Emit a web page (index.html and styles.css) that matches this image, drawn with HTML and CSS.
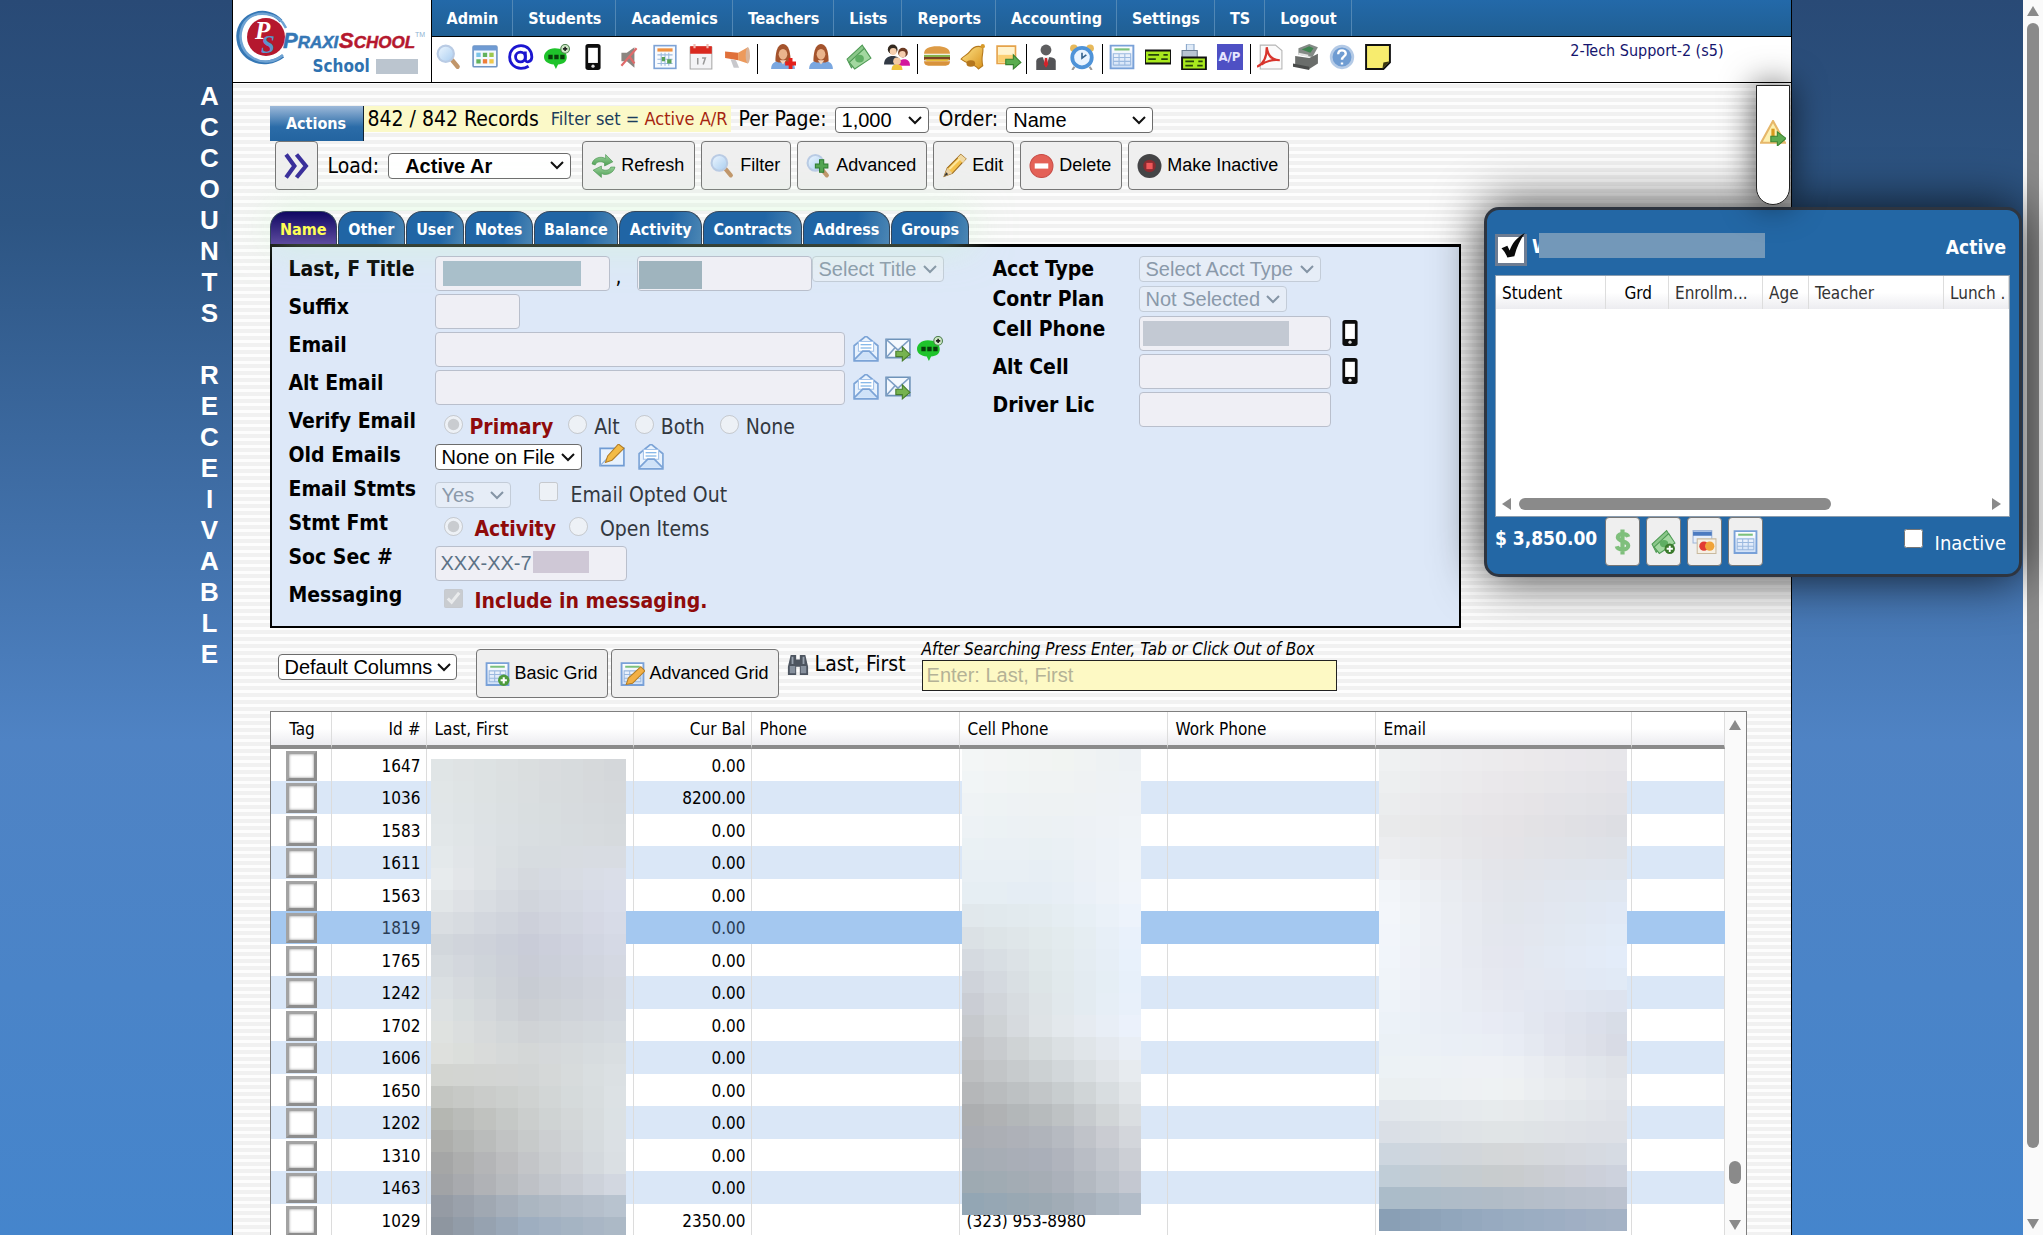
FILE: index.html
```html
<!DOCTYPE html>
<html lang="en">
<head>
<meta charset="utf-8">
<title>PraxiSchool - Accounts Receivable</title>
<link rel="stylesheet" href="styles.css">
</head>
<body>
<svg class="defs" aria-hidden="true">
<defs>
<linearGradient id="gold" x1="0" y1="0" x2="1" y2="1"><stop offset="0" stop-color="#ffe58a"/><stop offset="1" stop-color="#d8921c"/></linearGradient>
<linearGradient id="lens" x1="0" y1="0" x2="1" y2="1"><stop offset="0" stop-color="#eef7ff"/><stop offset="1" stop-color="#a9cdf0"/></linearGradient>
<linearGradient id="sheet" x1="0" y1="0" x2="0" y2="1"><stop offset="0" stop-color="#fff"/><stop offset="1" stop-color="#cfe0f7"/></linearGradient>
<linearGradient id="leaf" x1="0" y1="0" x2="0" y2="1"><stop offset="0" stop-color="#9bd39b"/><stop offset="1" stop-color="#4f9f55"/></linearGradient>
<symbol id="i-search" viewBox="0 0 24 24"><path d="M15 15l5 6" stroke="#c1966a" stroke-width="4" stroke-linecap="round"/><circle cx="9" cy="9" r="7.500" fill="url(#lens)" stroke="#b9cbe4" stroke-width="2"/></symbol>
<symbol id="i-searchplus" viewBox="0 0 24 24"><use href="#i-search"/><path d="M13 6h4v4h4v4h-4v4h-4v-4H9v-4h4z" fill="#54a552" stroke="#2f7d31"/></symbol>
<symbol id="i-board" viewBox="0 0 24 24"><rect x="1" y="2" width="22" height="19" rx="1" fill="#f4f9ff" stroke="#6f94c4" stroke-width="1.500"/><rect x="1" y="2" width="22" height="4" fill="#6f9bd3"/><path d="M4 8h4v4H4z" fill="#7cc4e8"/><path d="M10 8h4v4h-4zM4 14h4v4H4z" fill="#63b25c"/><path d="M16 8h4v4h-4z" fill="#9cc850"/><path d="M10 14h4v4h-4z" fill="#ee7d3a"/><path d="M16 14h4v4h-4z" fill="#f1c84b"/></symbol>
<symbol id="i-at" viewBox="0 0 24 24"><circle cx="11.500" cy="12" r="4.500" fill="none" stroke="#1c16d0" stroke-width="2.600"/><path d="M16 7v7c0 4 6 3 6-2 0-6-4-10.500-10-10.500S1.500 6 1.500 12 6 22.500 12 22.500c3 0 5-.7 7-2" fill="none" stroke="#1c16d0" stroke-width="2.600"/></symbol>
<symbol id="i-chat" viewBox="0 0 24 24"><path d="M10 4c6 0 11 3 11 8s-3 6-8 7l-2 4-2-4c-5-.5-9-3-9-7s4-8 10-8z" fill="#1fc32b"/><path d="M4 10h4v4H4zM9.500 10h4v4h-4zM15 10h4v4h-4z" fill="#083d0b"/><circle cx="19.500" cy="4.500" r="4" fill="#cfe9c6" stroke="#4b7d4b"/><path d="M19.500 2.500v4M17.500 4.500h4" stroke="#222" stroke-width="1.500"/></symbol>
<symbol id="i-phone" viewBox="0 0 24 24"><rect x="5" y="0" width="14" height="24" rx="2.500" fill="#0d0d0d"/><path d="M7.500 3.500h9v14h-9z" fill="#fff"/><circle cx="12" cy="20.500" r="1.500" fill="#ddd"/></symbol>
<symbol id="i-mute" viewBox="0 0 24 24"><path d="M5 8h5l7-5v19l-7-6H5z" fill="#8b8580"/><path d="M5 20L19 4M12 11l5 7" stroke="#e06a6a" stroke-width="2"/></symbol>
<symbol id="i-cal" viewBox="0 0 24 24"><rect x="2" y="1.500" width="20" height="21" fill="#f8fbff" stroke="#7ea3d6" stroke-width="1.500"/><path d="M5 4h14v3H5z" fill="#f0903e"/><path d="M5 10h14M5 14h14M5 18h14M8.500 8v12M12 8v12M15.500 8v12" stroke="#9dbbdd"/><path d="M9 12h3v4H9zM14 14h4v4h-4z" fill="#59a257"/></symbol>
<symbol id="i-date" viewBox="0 0 24 24"><path d="M2 3h20v20H2z" fill="#f4f4f6" stroke="#aaa"/><path d="M2 2h20v7H2z" fill="#d9291f"/><path d="M6 0v4M18 0v4" stroke="#efb9b0" stroke-width="2"/><path d="M9 13v6M13 13h3l-2 6" stroke="#999" fill="none" stroke-width="1.400"/></symbol>
<symbol id="i-horn" viewBox="0 0 24 24"><path d="M1 7l12 1v7L1 13z" fill="#e0703a"/><path d="M13 8l9-5v15l-9-3z" fill="#ed9a5c"/><ellipse cx="22" cy="10.500" rx="2" ry="7.500" fill="#d9b49b"/><path d="M6 14l5 1 3 7h-5z" fill="#c8c8cc"/></symbol>
<symbol id="i-user" viewBox="0 0 24 24"><path d="M1 23c0-6 5-8 11-8s11 2 11 8z" fill="#7aa7e0"/><path d="M5 16c0-2 0-16 7-16s7 14 7 16l-3 1H8z" fill="#a4532c"/><ellipse cx="12" cy="9.500" rx="4" ry="5" fill="#eab48c"/><path d="M9 15l3 4 3-4z" fill="#f3d3bb"/></symbol>
<symbol id="i-useradd" viewBox="0 0 24 24"><use href="#i-user"/><path d="M19 13v10M14 18h10" stroke="#e3201b" stroke-width="3.500"/></symbol>
<symbol id="i-cash" viewBox="0 0 24 24"><path d="M1 14L15 1l3 5L5 22z" fill="#8bc78a" stroke="#4f9a55"/><path d="M3 17L17 4l6 9L8 23z" fill="#a3d8a0" stroke="#4f9a55"/><ellipse cx="12.500" cy="13.500" rx="4" ry="3.500" fill="#5fae63"/></symbol>
<symbol id="i-people" viewBox="0 0 24 24"><circle cx="8" cy="5" r="4.500" fill="#33291f"/><circle cx="8.500" cy="7" r="3.200" fill="#f6cfae"/><path d="M0 19c0-6 4-8 8-8s8 2 8 8z" fill="#323a45"/><circle cx="17.500" cy="8" r="4.500" fill="#6b3a22"/><circle cx="17" cy="9.500" r="3" fill="#f6cfae"/><path d="M13 20c0-5 3-6 6-6s5 2 5 6z" fill="#d3199d"/><circle cx="12" cy="16" r="3.500" fill="#f3c9a4"/><path d="M7 24c0-4 2-5 5-5s5 1 5 5z" fill="#f0c33d"/></symbol>
<symbol id="i-burger" viewBox="0 0 24 24"><path d="M0 9c0-5 5-7 12-7s12 2 12 7z" fill="#dd9b45"/><path d="M0 10h24v3H0z" fill="#86b24a"/><path d="M0 12h24v3H0z" fill="#7b4323"/><path d="M0 14h24l-3 2H3z" fill="#e9c140"/><path d="M0 16h24c0 3-2 4-4 4H4c-2 0-4-1-4-4z" fill="#d8923b"/></symbol>
<symbol id="i-bell" viewBox="0 0 24 24"><path d="M21 3c1 6-2 8 0 17l-4 3C13 18 7 19 1 14c2-3 5-3 8-7s7-6 12-4z" fill="url(#gold)" stroke="#b5791d"/><ellipse cx="10" cy="18" rx="4" ry="3" fill="#b4761d"/><circle cx="21" cy="2" r="2" fill="#d79a2b"/></symbol>
<symbol id="i-noteout" viewBox="0 0 24 24"><path d="M1 2h17v16H1z" fill="#fff3cd" stroke="#e5a24a" stroke-width="1.500"/><path d="M2 10h15v7H2z" fill="#fbcf72"/><path d="M9 14h7v-4l7 7-7 6v-4H9z" fill="#5aad4f" stroke="#36812f"/></symbol>
<symbol id="i-man" viewBox="0 0 24 24"><circle cx="12" cy="5.500" r="5" fill="#5e5e60"/><path d="M3 24V16c0-3 3-4 9-4s9 1 9 4v8z" fill="#535356"/><path d="M9 12h6l-3 9z" fill="#eee"/><path d="M11 13h2l1 6-2 3-2-3z" fill="#d2232a"/></symbol>
<symbol id="i-clock" viewBox="0 0 24 24"><path d="M5 21l-2 3M19 21l2 3" stroke="#999" stroke-width="2"/><circle cx="4.500" cy="4" r="3.500" fill="#e7b95b"/><circle cx="19.500" cy="4" r="3.500" fill="#e7b95b"/><circle cx="12" cy="12.500" r="9" fill="#eaf4ff" stroke="#4f93d8" stroke-width="3.500"/><path d="M12 8v5l4-3" stroke="#37648f" stroke-width="1.500" fill="none"/></symbol>
<symbol id="i-sheet" viewBox="0 0 24 24"><path d="M1.500 1.500h21v21h-21z" fill="url(#sheet)" stroke="#79a1d8" stroke-width="1.800"/><path d="M5 5h14" stroke="#7cc17c" stroke-width="2"/><path d="M4 9h16M4 12.500h16M4 16h16M4 19.500h16M4 8.500v11M9.300 8.500v11M14.600 8.500v11M20 8.500v11" stroke="#9bb9df"/></symbol>
<symbol id="i-check" viewBox="0 0 24 24"><path d="M0 6h24v12H0z" fill="#a9ea1e" stroke="#111" stroke-width="1.800"/><path d="M3 10h10M3 14h7M15 14h6M17 10h4" stroke="#28450a" stroke-width="1.700"/></symbol>
<symbol id="i-printcheck" viewBox="0 0 24 24"><path d="M5 0h7v7H5z" fill="#dfeaf7" stroke="#8aa7ca"/><path d="M1 6h14v9H1z" fill="#b9c4d2" stroke="#6c7d92"/><path d="M1 12.500h22v11H1z" fill="#a9ea1e" stroke="#111" stroke-width="1.800"/><path d="M4 16h8M4 20h7M15 20h5M16 16h4" stroke="#28450a" stroke-width="1.500"/></symbol>
<symbol id="i-pdf" viewBox="0 0 24 24"><path d="M3 1h14l6 5v17H3z" fill="#fbfbfb" stroke="#b5b5b5"/><path d="M0 21c7-3 9-10 9-18 1 8 5 12 12 12-6-1-13 1-17 4" fill="none" stroke="#d8342c" stroke-width="2"/></symbol>
<symbol id="i-register" viewBox="0 0 24 24"><path d="M5 4l10-4 8 3-5 9-13-2z" fill="#848a86"/><path d="M8 5l7-3 4 2-3 4z" fill="#3f8450"/><path d="M2 11l13 2 8-4v9l-8 5-13-3z" fill="#6a6d6b"/><path d="M0 18l15 3v3L0 21z" fill="#494b4a"/><path d="M5 9l9 2" stroke="#e4e4e4" stroke-width="2"/></symbol>
<symbol id="i-help" viewBox="0 0 24 24"><circle cx="12" cy="12" r="10" fill="#6f9cd2" stroke="#b4cae6" stroke-width="2.500"/><path d="M8.500 9.500c0-5 7-4.500 7-.5 0 2.500-3.500 2.500-3.500 5.500M12 17v2" fill="none" stroke="#fff" stroke-width="2.200"/></symbol>
<symbol id="i-sticky" viewBox="0 0 24 24"><path d="M1 1h22v16l-6 6H1z" fill="#f7ec6e" stroke="#111" stroke-width="1.800"/><path d="M16 23l1-6 6-1z" fill="#3c3810"/></symbol>
<symbol id="i-refresh" viewBox="0 0 24 24"><path d="M1 10c1-6 9-8 13-5V1l7 7-8 4V9c-4-2-8-1-9 2z" fill="url(#leaf)" stroke="#4a9450" stroke-width=".6"/><path d="M23 13c-1 6-9 9-13 6v4l-8-7 8-4v3c4 2 8 1 9-2z" fill="url(#leaf)" stroke="#4a9450" stroke-width=".6"/></symbol>
<symbol id="i-pencil" viewBox="0 0 24 24"><path d="M2 22l3-8L18 1l5 4L10 19z" fill="#f5c24c" stroke="#9c6a1e"/><path d="M15 4L18 1l5 4-3 4z" fill="#f0d9a4"/><path d="M5 14l5 5-8 3z" fill="#e8cfa0"/><path d="M2 22l2-4 2 2z" fill="#333"/><path d="M7 15L17 5" stroke="#fde59c" stroke-width="2"/></symbol>
<symbol id="i-delete" viewBox="0 0 24 24"><circle cx="12" cy="12" r="11" fill="#e46157" stroke="#c84b45"/><path d="M5.500 9.500h13v5h-13z" fill="#fff"/></symbol>
<symbol id="i-stop" viewBox="0 0 24 24"><circle cx="12" cy="12" r="11.500" fill="#444446"/><circle cx="12" cy="12" r="6" fill="#8b2b30"/><path d="M9 9h6v6H9z" fill="#f0585a"/></symbol>
<symbol id="i-next" viewBox="0 0 24 24"><path d="M2 1l8 11-8 11M12 1l9 11-9 11" fill="none" stroke="#3a2f9b" stroke-width="4"/></symbol>
<symbol id="i-mail" viewBox="0 0 24 24"><path d="M1 9l11-9 11 9v14H1z" fill="#e8f2fd" stroke="#7ba3d6" stroke-width="1.500"/><path d="M5 5h14v9H5z" fill="#fff" stroke="#a4c3ea"/><path d="M7 8h10M7 11h10" stroke="#62a3e2"/><path d="M1 22l8-8h6l8 8" fill="#cfe2f8" stroke="#7ba3d6" stroke-width="1.500"/></symbol>
<symbol id="i-mailout" viewBox="0 0 24 24"><path d="M1 3h22v17H1z" fill="#f3f8fe" stroke="#6f93b9" stroke-width="1.500"/><path d="M1 3l11 10L23 3M1 20l8-9" fill="none" stroke="#7d9ec4" stroke-width="1.500"/><path d="M10 14h6v-4l7 7-7 6v-4h-6z" fill="#76b34f" stroke="#477d2b"/></symbol>
<symbol id="i-mailedit" viewBox="0 0 24 24"><path d="M1 4h22v16H1z" fill="#e8f2fd" stroke="#6f9bd3" stroke-width="1.500"/><path d="M1 20l8-8" stroke="#8fb1dd"/><path d="M6 17l2-6L18 0l5 4-11 11z" fill="#f3bb45" stroke="#b27c24"/></symbol>
<symbol id="i-sheetadd" viewBox="0 0 24 24"><use href="#i-sheet"/><circle cx="18" cy="18" r="5.500" fill="#4d9b3b"/><path d="M18 15v6M15 18h6" stroke="#fff" stroke-width="2"/></symbol>
<symbol id="i-sheetedit" viewBox="0 0 24 24"><use href="#i-sheet"/><path d="M6 22l2-6L20 5l4 4-12 12z" fill="#f3b045" stroke="#b27c24"/></symbol>
<symbol id="i-binoc" viewBox="0 0 24 24"><path d="M4 1h6v5h4V1h6l3 13v9h-9v-9h-4v9H1v-9z" fill="#4d5560"/><path d="M3 13h6v8H3zM15 13h6v8h-6z" fill="#87919e"/><path d="M6 3v8M18 3v8" stroke="#97a1ad" stroke-width="2"/></symbol>
<symbol id="i-warn" viewBox="0 0 24 24"><path d="M12 1l11 20H1z" fill="#fdf0b0" stroke="#e6b76a" stroke-width="2"/><path d="M12 8v8" stroke="#d99a1d" stroke-width="3"/><path d="M10 15h6v-4l8 6-8 7v-4h-6z" fill="#5dab51" stroke="#3b8432"/></symbol>
<symbol id="i-dollar" viewBox="0 0 24 24"><path d="M17.500 7c-1-3-10-4-10 .5 0 4.500 10 3 10 8 0 5-10 4.500-11 .5M12 0v24" fill="none" stroke="#7fbf7c" stroke-width="4"/></symbol>
<symbol id="i-cashadd" viewBox="0 0 24 24"><use href="#i-cash"/><circle cx="18" cy="18.500" r="5" fill="#3b7a2c"/><path d="M18 15.500v6M15 18.500h6" stroke="#fff" stroke-width="1.800"/></symbol>
<symbol id="i-cards" viewBox="0 0 24 24"><path d="M1 1h18v12H1z" fill="#e7effb" stroke="#9fb5d8"/><path d="M1 2h18v4H1z" fill="#4d7bc0"/><path d="M5 9h18v14H5z" fill="#f6f0e4" stroke="#c9b99e"/><circle cx="11.500" cy="16" r="4.500" fill="#e23b32"/><circle cx="17" cy="16" r="4.500" fill="#f0a43a"/></symbol>
<symbol id="i-tick" viewBox="0 0 24 24"><path d="M3 13l5-2 2 4C12 9 16 4 23 0c-4 6-7 12-9 20l-6 1c-1-3-3-6-5-8z" fill="#0a0a0a"/></symbol>
</defs>
</svg>

<div class="page">
  <div class="gutter">
    <div class="vertical"><span>A</span><span>C</span><span>C</span><span>O</span><span>U</span><span>N</span><span>T</span><span>S</span><span>&nbsp;</span><span>R</span><span>E</span><span>C</span><span>E</span><span>I</span><span>V</span><span>A</span><span>B</span><span>L</span><span>E</span></div>
  </div>

  <div class="shell">
    <header class="top">
      <div class="brand">
        <svg class="logo" viewBox="0 0 192 60" role="img" aria-label="PraxiSchool">
          <circle cx="31" cy="28" r="19" fill="#b5182e"/>
          <path d="M46 12C32-4 4 4 3 27c0 24 26 34 45 20" fill="none" stroke="#3577b5" stroke-width="3.500"/>
          <path d="M51 19C44 3 20 0 10 13c-8 12-5 29 8 36 10 6 22 4 30-3" fill="none" stroke="#6fa3d3" stroke-width="2.500"/>
          <text x="20" y="30" class="mono-p">P</text><text x="26" y="44" class="mono-s">S</text>
          <text x="48" y="39" class="word blue">P<tspan class="small">RAXI</tspan></text>
          <text x="104" y="39" class="word red">S<tspan class="small">CHOOL</tspan></text>
          <text x="180" y="28" class="tm">TM</text>
        </svg>
        <div class="school">School <span class="mask mask-school"></span></div>
      </div>
      <div class="bars">
        <nav class="menu">
          <a href="#">Admin</a><a href="#">Students</a><a href="#">Academics</a><a href="#">Teachers</a><a href="#">Lists</a><a href="#">Reports</a><a href="#">Accounting</a><a href="#">Settings</a><a href="#">TS</a><a href="#">Logout</a>
        </nav>
        <div class="tools">
          <div class="group lead">
            <svg><use href="#i-search"/></svg><svg><use href="#i-board"/></svg><svg><use href="#i-at"/></svg><svg><use href="#i-chat"/></svg><svg><use href="#i-phone"/></svg><svg><use href="#i-mute"/></svg><svg><use href="#i-cal"/></svg><svg><use href="#i-date"/></svg><svg><use href="#i-horn"/></svg>
          </div>
          <div class="group loose">
            <svg><use href="#i-useradd"/></svg><svg><use href="#i-user"/></svg><svg><use href="#i-cash"/></svg><svg><use href="#i-people"/></svg>
          </div>
          <div class="group close">
            <svg><use href="#i-burger"/></svg><svg><use href="#i-bell"/></svg><svg><use href="#i-noteout"/></svg>
          </div>
          <div class="group">
            <svg><use href="#i-man"/></svg><svg><use href="#i-clock"/></svg>
          </div>
          <div class="group">
            <svg><use href="#i-sheet"/></svg><svg><use href="#i-check"/></svg><svg><use href="#i-printcheck"/></svg><span class="ap">A/P</span>
          </div>
          <div class="group last">
            <svg><use href="#i-pdf"/></svg><svg><use href="#i-register"/></svg><svg><use href="#i-help"/></svg><svg><use href="#i-sticky"/></svg>
          </div>
          <div class="who">2-Tech Support-2 (s5)</div>
        </div>
      </div>
    </header>

    <main>
      <div class="records">
        <button class="actions">Actions</button>
        <div class="band"><span class="count">842 / 842 Records</span><span class="filter">Filter set = <em>Active A/R</em></span></div>
        <label for="per">Per Page:</label>
        <select id="per" class="w-94"><option>1,000</option></select>
        <label for="order">Order:</label>
        <select id="order" class="w-147"><option>Name</option></select>
      </div>
      <div class="commands">
        <button class="btn" aria-label="Next"><svg><use href="#i-next"/></svg></button>
        <label for="load">Load:</label>
        <select id="load" class="load"><option>Active Ar</option></select>
        <button class="btn"><svg><use href="#i-refresh"/></svg>Refresh</button>
        <button class="btn"><svg><use href="#i-search"/></svg>Filter</button>
        <button class="btn"><svg><use href="#i-searchplus"/></svg>Advanced</button>
        <button class="btn"><svg><use href="#i-pencil"/></svg>Edit</button>
        <button class="btn"><svg><use href="#i-delete"/></svg>Delete</button>
        <button class="btn"><svg><use href="#i-stop"/></svg>Make Inactive</button>
      </div>

      <nav class="tabs">
        <a class="on" href="#">Name</a><a href="#">Other</a><a href="#">User</a><a href="#">Notes</a><a href="#">Balance</a><a href="#">Activity</a><a href="#">Contracts</a><a href="#">Address</a><a href="#">Groups</a>
      </nav>

      <form class="panel">
        <div class="left">
          <div class="row"><label for="last">Last, F Title</label><div class="field">
            <span class="masked"><input id="last" class="w-175" disabled><span class="mask mask-last"></span></span><span class="comma">,</span>
            <span class="masked"><input class="w-175" aria-label="First" disabled><span class="mask mask-first"></span></span>
            <select aria-label="Title" disabled><option>Select Title</option></select></div></div>
          <div class="row"><label for="suffix">Suffix</label><div class="field"><input id="suffix" class="w-85" disabled></div></div>
          <div class="row"><label for="email">Email</label><div class="field"><input id="email" class="w-410" disabled><span class="icons"><svg><use href="#i-mail"/></svg><svg><use href="#i-mailout"/></svg><svg><use href="#i-chat"/></svg></span></div></div>
          <div class="row"><label for="alt">Alt Email</label><div class="field"><input id="alt" class="w-410" disabled><span class="icons"><svg><use href="#i-mail"/></svg><svg><use href="#i-mailout"/></svg></span></div></div>
          <div class="row short"><span class="lbl">Verify Email</span><div class="field choices">
            <input type="radio" name="v" id="v1" checked disabled><label for="v1" class="hot">Primary</label>
            <input type="radio" name="v" id="v2" disabled><label for="v2">Alt</label>
            <input type="radio" name="v" id="v3" disabled><label for="v3">Both</label>
            <input type="radio" name="v" id="v4" disabled><label for="v4">None</label></div></div>
          <div class="row short"><label for="old">Old Emails</label><div class="field pad"><select id="old"><option>None on File</option></select><span class="icons wide"><svg><use href="#i-mailedit"/></svg><svg><use href="#i-mail"/></svg></span></div></div>
          <div class="row short"><label for="stm">Email Stmts</label><div class="field choices opt"><select id="stm" class="w-76" disabled><option>Yes</option></select><input type="checkbox" id="opt" disabled><label for="opt">Email Opted Out</label></div></div>
          <div class="row short"><span class="lbl">Stmt Fmt</span><div class="field choices far">
            <input type="radio" name="f" id="f1" checked disabled><label for="f1" class="hot">Activity</label>
            <input type="radio" name="f" id="f2" disabled><label for="f2">Open Items</label></div></div>
          <div class="row"><label for="soc">Soc Sec #</label><div class="field pad"><span class="masked"><input id="soc" class="w-192" value="XXX-XX-7" disabled><span class="mask mask-soc"></span></span></div></div>
          <div class="row"><span class="lbl">Messaging</span><div class="field choices far"><input type="checkbox" id="msg" checked disabled><label for="msg" class="hot">Include in messaging.</label></div></div>
        </div>
        <div class="right">
          <div class="row tight"><label for="acct">Acct Type</label><div class="field"><select id="acct" disabled><option>Select Acct Type</option></select></div></div>
          <div class="row tight"><label for="plan">Contr Plan</label><div class="field"><select id="plan" disabled><option>Not Selected</option></select></div></div>
          <div class="row"><label for="cell">Cell Phone</label><div class="field"><span class="masked"><input id="cell" class="w-192" disabled><span class="mask mask-cell"></span></span><span class="icons"><svg><use href="#i-phone"/></svg></span></div></div>
          <div class="row"><label for="altcell">Alt Cell</label><div class="field"><input id="altcell" class="w-192" disabled><span class="icons"><svg><use href="#i-phone"/></svg></span></div></div>
          <div class="row"><label for="lic">Driver Lic</label><div class="field"><input id="lic" class="w-192" disabled></div></div>
        </div>
      </form>

      <div class="gridbar">
        <select aria-label="Columns" class="cols"><option>Default Columns</option></select>
        <button class="btn"><svg><use href="#i-sheetadd"/></svg>Basic Grid</button>
        <button class="btn"><svg><use href="#i-sheetedit"/></svg>Advanced Grid</button>
        <label class="find" for="q"><svg><use href="#i-binoc"/></svg>Last, First</label>
        <div class="query"><em>After Searching Press Enter, Tab or Click Out of Box</em><input id="q" placeholder="Enter: Last, First"></div>
      </div>

      <section class="grid">
        <div class="sheet">
          <table>
            <colgroup><col class="c-tag"><col class="c-id"><col class="c-name"><col class="c-bal"><col class="c-ph"><col class="c-ph"><col class="c-ph"><col class="c-mail"><col></colgroup>
            <thead><tr><th class="mid">Tag</th><th class="num">Id #</th><th>Last, First</th><th class="num">Cur Bal</th><th>Phone</th><th>Cell Phone</th><th>Work Phone</th><th>Email</th><th></th></tr></thead>
            <tbody id="rows"></tbody>
          </table>
          <svg class="mosaic m-name" data-src="name" preserveAspectRatio="none"></svg>
          <svg class="mosaic m-cell" data-src="cell" preserveAspectRatio="none"></svg>
          <svg class="mosaic m-mail" data-src="mail" preserveAspectRatio="none"></svg>
        </div>
        <div class="scroll inner"><i class="up"></i><i class="thumb"></i><i class="down"></i></div>
      </section>
    </main>
    <button class="alert-tab" aria-label="Alerts"><svg><use href="#i-warn"/></svg></button>
  </div>

  <div class="gutter"></div>
  <div class="scroll outer"><i class="up"></i><i class="thumb"></i><i class="down"></i></div>

  <aside class="card">
    <div class="card-head"><span class="bigcheck"><svg><use href="#i-tick"/></svg></span><b>W<span class="mask mask-card"></span></b><b class="state">Active</b></div>
    <div class="card-list">
      <table>
        <colgroup><col class="s-1"><col class="s-2"><col class="s-3"><col class="s-4"><col class="s-5"><col></colgroup>
        <thead><tr><th class="dark">Student</th><th class="dark num">Grd</th><th>Enrollm...</th><th>Age</th><th>Teacher</th><th>Lunch .</th></tr></thead>
      </table>
      <div class="hscroll"><i class="lt"></i><i class="track"><i class="thumb"></i></i><i class="rt"></i></div>
    </div>
    <div class="card-foot"><b>$ 3,850.00</b>
      <button class="btn" aria-label="Payment"><svg><use href="#i-dollar"/></svg></button>
      <button class="btn" aria-label="Add cash"><svg><use href="#i-cashadd"/></svg></button>
      <button class="btn" aria-label="Cards"><svg><use href="#i-cards"/></svg></button>
      <button class="btn" aria-label="Ledger"><svg><use href="#i-sheet"/></svg></button>
      <span class="inactive"><input type="checkbox" id="ina"><label for="ina">Inactive</label></span>
    </div>
  </aside>
</div>
<script src="app.js"></script>
</body>
</html>
```
FILE: styles.css
```css
* { box-sizing: border-box; }
body {
  margin: 0;
  font-family: "DejaVu Sans Condensed", "DejaVu Sans", sans-serif;
  font-stretch: condensed;
  font-size: 21px;
  line-height: 28px;
  color: #000;
}
.defs { position: absolute; width: 0; height: 0; }
svg { flex: none; width: 26px; height: 26px; display: block; }
a { text-decoration: none; }
button, input, select { font-family: "Liberation Sans", Arial, sans-serif; font-size: 20px; margin: 0; }
button { color: #000; }

.page {
  position: relative;
  display: flex;
  height: 100vh;
  overflow: hidden;
  background: linear-gradient(#294a76, #2d5583 18%, #4f83c4 60%, #4585cc);
}
.gutter { flex: 1; display: flex; justify-content: flex-end; padding: 81px 7px 0 0; }
.vertical {
  width: 30px;
  color: #fff;
  font: bold 26px/31px "Liberation Sans", Arial, sans-serif;
  text-align: center;
}
.vertical span { display: block; }

.shell {
  position: relative;
  flex: 0 1 1560px;
  border: solid #000;
  border-width: 0 1px;
  background: repeating-linear-gradient(#f1f1f1 0 4px, #fdfdfd 4px 7px);
}
.top { display: flex; height: 83px; border-bottom: 1px solid #000; background: #fff; }
.brand { width: 199px; border-right: 1px solid #000; padding-top: 9px; }
.logo { width: 192px; height: 60px; margin-left: 2px; }
.mono-p { font: italic bold 25px "Liberation Serif", serif; fill: #fff; }
.mono-s { font: italic bold 25px "Liberation Serif", serif; fill: #5b95cc; }
.word { font: italic bold 22px "Liberation Sans", sans-serif; }
.word .small { font-size: 17px; }
.blue { fill: #3577b5; stroke: #3577b5; stroke-width: .5px; }
.red { fill: #b5182e; stroke: #b5182e; stroke-width: .5px; }
.tm { font: 7px "Liberation Sans", sans-serif; fill: #8fb2d2; }
.school { display: flex; gap: 6px; align-items: center; margin: -14px 0 0 80px; color: #2f72b0; font-weight: bold; font-size: 17px; line-height: 22px; }
.mask { display: block; background: #a9bfca; }
.mask-school { width: 42px; height: 15px; background: #bbc5cf; }
.bars { flex: 1; }
.menu { display: flex; height: 37px; border-bottom: 1px solid #000; background: linear-gradient(#2369a9, #205f93); }
.menu a { padding: 0 14px; border-right: 1px solid #5187b5; color: #fff; font-size: 16px; line-height: 37px; font-weight: bold; }
.menu { padding-left: 1px; gap: 1px; }
.tools { display: flex; height: 45px; padding: 7px 0 8px 4px; }
.group { display: flex; gap: 10px; padding: 0 7px 0 0; margin-right: 6px; border-right: 1px solid #000; }
.lead { margin-right: 12px; }
.loose { gap: 12px; }
.close { padding-right: 4px; }
.last { border: 0; }
.group svg { width: 26px; }
.ap { width: 26px; height: 26px; background: #4e50c4; color: #e6e6ff; font-size: 13px; line-height: 26px; font-weight: bold; text-align: center; }
.who { margin: -7px 67px 0 auto; color: #15156e; font-size: 16px; line-height: 27px; }

main { padding: 23px 44px 0 37px; }
.records { display: flex; align-items: flex-start; height: 35px; line-height: 26px; }
.actions { width: 94px; height: 35px; border: 0; border-right: 1px solid #123; background: linear-gradient(#9db9d9, #2b6ca8 60%, #2364a0); color: #fff; font-family: inherit; font-size: 16px; font-weight: bold; }
.band { display: flex; justify-content: space-between; width: 367px; margin-right: 8px; padding: 0 3px 0 4px; background: #fbf9c8; white-space: nowrap; }
.filter { color: #1c3d5c; font-size: 18px; }
.filter em { color: #a52410; font-style: normal; }
select {
  appearance: none;
  height: 26px;
  padding: 0 25px 0 6px;
  border: 1px solid #6c6c6c;
  border-radius: 4px;
  background: #fff url("data:image/svg+xml,%3Csvg xmlns='http://www.w3.org/2000/svg' viewBox='0 0 14 9'%3E%3Cpath d='M1 1l6 6 6-6' fill='none' stroke='%23111' stroke-width='2'/%3E%3C/svg%3E") right 6px center / 14px 9px no-repeat;
  color: #000;
}
.records select { margin: 1px 10px 0 8px; }
.w-94 { width: 94px; }
.w-147 { width: 147px; }
.commands { display: flex; align-items: center; gap: 6px; height: 49px; padding-left: 5px; }
.commands label { margin: 0 3px 0 4px; }
.load { width: 183px; margin-right: 5px; padding-left: 16px; font-weight: bold; }
.btn { display: flex; align-items: center; gap: 5px; height: 49px; padding: 0 10px 0 8px; border: 1px solid #767676; border-radius: 4px; background: #efefef; font-size: 18px; white-space: nowrap; }
.btn svg { width: 25px; }
.btn[aria-label] { padding: 0 8px; }

.tabs { position: relative; display: flex; width: 700px; height: 33px; margin-top: 21px; gap: 1px; box-shadow: 0 0 40px rgba(205, 250, 205, .6); }
.tabs a { flex: 1 1 auto; border: 1px solid #33465a; border-bottom: 0; border-radius: 16px 16px 0 0; background: linear-gradient(100deg, #2065a5 60%, #4b86b4); color: #fff; font-size: 16px; line-height: 36px; font-weight: bold; text-align: center; }
.tabs .on { background: linear-gradient(#100763, #5d4b9e); color: #ffff55; }

.panel { display: flex; max-width: 1191px; height: 384px; padding: 8px 0 0 17px; border: 3px solid #000; border-width: 3px 2px 2px; background: #dde8f8; }
.left { width: 704px; }
.row { display: flex; height: 38px; }
.short { height: 34px; }
.tight { height: 30px; }
.row > label, .row > .lbl { width: 146px; font-weight: bold; white-space: nowrap; }
.field { display: flex; align-items: flex-start; padding-top: 1px; }
.field input:not([type]) { height: 35px; padding: 0 5px; border: 1px solid #b9bfcc; border-radius: 4px; background: #efeff5; color: #5c7286; }
.field select:disabled { border-color: #c3ccd8; background-color: #e6edf7; color: #8a99aa; opacity: 1; background-image: url("data:image/svg+xml,%3Csvg xmlns='http://www.w3.org/2000/svg' viewBox='0 0 14 9'%3E%3Cpath d='M1 1l6 6 6-6' fill='none' stroke='%238494a5' stroke-width='2'/%3E%3C/svg%3E"); }
.masked { position: relative; display: block; }
.masked .mask { position: absolute; top: 5px; left: 8px; height: 25px; }
.mask-last { width: 138px; }
.masked .mask-first { left: 2px; width: 63px; height: 28px; background: #9fb4be; }
.masked .mask-soc { left: 98px; width: 56px; height: 22px; background: #cfc8d6; }
.mask-cell { width: 146px; background: #c3c9d3; }
.masked .mask-cell { left: 4px; }
.comma { width: 27px; padding-left: 6px; line-height: 42px; }
.w-175 { width: 175px; }
.w-85 { width: 85px; }
.w-76 { width: 76px; }
.w-192 { width: 192px; }
.w-410 { width: 410px; }
.icons { display: flex; gap: 6px; padding: 4px 0 0 8px; }
.icons.wide { gap: 13px; padding: 0 0 0 17px; }
.field.pad { padding-top: 3px; }
.choices { padding: 3px 0 0 9px; color: #33383f; }
.choices input { flex: none; width: 19px; height: 19px; margin: 5px 7px 0 0; }
.choices label { margin: 3px 15px 0 0; white-space: nowrap; }
.far input { margin-right: 12px; }
.far label { margin-right: 13px; }
.field.opt { padding: 7px 0 0; }
.opt input { margin: 0 13px 0 28px; }
.opt label { margin-top: -1px; }
.choices .hot { color: #8f0b0b; font-weight: bold; }
.right .icons { padding-left: 6px; }

.gridbar { display: flex; align-items: flex-start; height: 62px; margin-top: 21px; padding-left: 8px; }
.cols { width: 179px; margin: 5px 19px 0 0; padding-right: 20px; background-position: right 5px center; }
.gridbar .btn { margin-right: 3px; padding-right: 9px; }
.find { display: flex; gap: 6px; margin: 1px 16px 0 5px; white-space: nowrap; }
.find svg { width: 22px; height: 22px; margin-top: 4px; }
.query { display: flex; flex-direction: column; width: 415px; margin-top: -10px; }
.query em { font-size: 17px; line-height: 21px; white-space: nowrap; }
.query input { height: 31px; padding: 0 4px; border: 1px solid #222; background: #fdf9c4; }
.query input::placeholder { color: #b4b296; }

.grid { display: flex; height: 560px; border: 1px solid #7f7f7f; background: #fff; }
.sheet { position: relative; flex: 1; overflow: hidden; }
table { width: 100%; table-layout: fixed; border-collapse: separate; border-spacing: 0; font-size: 17px; line-height: 20px; }
th { height: 33px; padding: 0 5px 0 8px; border-right: 1px solid #ddd; background: linear-gradient(#fff 50%, #ececf0); font-weight: normal; text-align: left; white-space: nowrap; }
.sheet th { height: 37px; border-bottom: 4px solid #8b8b8b; }
.sheet td { height: 32px; padding: 1px 5px 0 7px; border-right: 1px solid #dcdcdc; white-space: nowrap; }
.sheet tr:nth-child(even) td { height: 33px; background: #dae7f7; }
.sheet tr.sel td { background: #a4c8f0; border-right-color: #a4c8f0; color: #2a3c55; }
.sheet .num { text-align: right; }
.mid { text-align: center; }
.c-tag { width: 61px; }
.c-id { width: 95px; }
.c-name { width: 207px; }
.c-bal { width: 118px; }
.c-ph { width: 208px; }
.c-mail { width: 256px; }
.tag { appearance: none; display: block; width: 31px; height: 30px; margin: 0 auto; border: 3px solid #8d8d8d; border-color: #a3a3a3 #8d8d8d #8d8d8d #a3a3a3; background: #fff; box-shadow: inset 0 0 3px #888; }
.mosaic { position: absolute; }
.m-name { left: 160px; top: 47px; width: 195px; height: 480px; }
.m-cell { left: 691px; top: 37px; width: 179px; height: 466px; }
.m-mail { left: 1108px; top: 37px; width: 248px; height: 482px; }

.scroll { display: flex; flex-direction: column; align-items: center; background: #fafafa; }
.inner { width: 21px; height: 524px; padding: 8px 0 6px; }
.outer { width: 20px; padding: 6px 0; }
.up, .down { border: 6px solid transparent; }
.up { border-top: 0; border-bottom: 10px solid #8a8a8a; }
.down { border-bottom: 0; border-top: 10px solid #8a8a8a; }
.thumb { display: block; border-radius: 6px; background: #8a8a8a; }
.inner .thumb { width: 12px; height: 23px; margin: auto 0 36px; }
.outer .thumb { width: 12px; height: 92%; margin: 7px 0 auto; }

.alert-tab { position: absolute; z-index: 2; top: 85px; right: 1px; width: 34px; height: 120px; padding: 0 3px 24px; border: 1px solid #222; border-radius: 0 0 17px 17px; background: #fff; box-shadow: 0 0 34px rgba(0, 0, 0, .7); }

.card { position: absolute; top: 207px; right: 21px; width: 538px; height: 370px; padding: 24px 9px 0 8px; border: 3px solid #2e3540; border-radius: 15px; background: #2367a5; box-shadow: 0 0 50px rgba(0, 0, 0, .8); color: #fff; }
.card-head { display: flex; height: 41px; font-size: 19px; line-height: 26px; }
.bigcheck { width: 32px; height: 32px; margin-right: 5px; border: 3px solid #6d7c92; background: #fff; }
.bigcheck svg { margin-top: -4px; width: 28px; height: 28px; }
.card-head b { display: flex; margin-top: -1px; }
.mask-card { width: 226px; height: 25px; margin-left: -12px; background: #7398b9; }
.card-head .state { margin: 0 4px 0 auto; }
.card-list { display: flex; flex-direction: column; height: 242px; border: 1px solid #8a9db0; background: #fff; }
.card-list th { padding-left: 6px; color: #333; overflow: hidden; }
.card-list .dark { color: #000; }
.card-list .num { padding-right: 16px; text-align: right; }
.s-1 { width: 110px; }
.s-2 { width: 63px; }
.s-3 { width: 94px; }
.s-4 { width: 46px; }
.s-5 { width: 135px; }
.hscroll { display: flex; align-items: center; gap: 8px; height: 24px; margin-top: auto; padding: 0 8px 0 6px; }
.track { flex: 1; }
.track .thumb { width: 67%; height: 12px; }
.lt, .rt { border: 6px solid transparent; }
.lt { border-left: 0; border-right: 9px solid #8a8a8a; }
.rt { border-right: 0; border-left: 9px solid #8a8a8a; }
.card-foot { display: flex; gap: 6px; }
.card-foot b { width: 104px; font-size: 19px; line-height: 42px; white-space: nowrap; }
.card-foot .btn { padding: 0 4px; width: 35px; }
.inactive { display: flex; margin: 12px 4px 0 auto; font-size: 20px; }
.inactive input { width: 19px; height: 19px; margin-right: 12px; }
```
FILE: app.js
```js
const data = [
  ["1647", "0.00"], ["1036", "8200.00"], ["1583", "0.00"], ["1611", "0.00"], ["1563", "0.00"],
  ["1819", "0.00"], ["1765", "0.00"], ["1242", "0.00"], ["1702", "0.00"], ["1606", "0.00"],
  ["1650", "0.00"], ["1202", "0.00"], ["1310", "0.00"], ["1463", "0.00"], ["1029", "2350.00"]
];
document.getElementById("rows").innerHTML = data.map(([id, bal]) =>
  `<tr class="${id === "1819" ? "sel" : ""}"><td><input type="checkbox" class="tag" aria-label="Tag ${id}"></td>` +
  `<td class="num">${id}</td><td></td><td class="num">${bal}</td><td></td>` +
  `<td>${id === "1029" ? "(323) 953-8980" : ""}</td><td></td><td></td><td></td></tr>`).join("");

// Privacy mosaics: colour stops [height fraction, left, middle, right], drawn as blocks.
const mosaics = {
  name: { cols: 9, rows: 22, stops: [
    [0, "e0e5e6", "dadedf", "d4d7da"], [.15, "e2e7e9", "d9dee1", "d6dadd"], [.25, "e8ebed", "d4d8de", "dbdfea"],
    [.38, "d2d7dc", "c9ccd8", "d5d9e5"], [.5, "dce1e3", "c8ccd2", "d2d6de"], [.61, "e0e2df", "d4d7d8", "d8dde1"],
    [.68, "d0d2ce", "d2d5d4", "dce1e4"], [.76, "b5b7b2", "cbcecd", "dbe1e4"], [.85, "a6a6a6", "c4c6c8", "dbe0e4"],
    [.92, "a0a2a6", "bcc0c6", "d0d5df"], [.95, "959ba4", "acb6c1", "b9c3cf"], [1, "8e96a0", "9eaec0", "acb9c6"]] },
  cell: { cols: 8, rows: 21, stops: [
    [0, "f3f6f6", "f2f4f2", "edf1f4"], [.3, "e6eef3", "e5edf4", "f0f4fa"], [.4, "dbe1e5", "e2eaec", "e9f1fb"],
    [.52, "cdd0d8", "dfe7e9", "e6f0fa"], [.6, "c6c9cd", "e2e7ea", "ebf1fb"], [.7, "bdbfc1", "cfd4d6", "e7ebef"],
    [.8, "acaeb0", "b9bdbf", "dadee1"], [.88, "a8acb4", "adb0bb", "cfd1d7"], [.96, "9caab2", "a6adb5", "c2c7d0"], [1, "93a6b4", "9ea9b3", "b2bcc8"]] },
  mail: { cols: 12, rows: 22, stops: [
    [0, "eff1f2", "eceaec", "e7e6ea"], [.15, "e9eaeb", "e5e3e6", "dddee3"], [.3, "f3f6fa", "e2e5eb", "e0e8f3"],
    [.45, "f1f5fa", "e4e6ee", "e3edfa"], [.6, "ebf1f7", "e8ecf5", "d6d9e3"], [.7, "edf2f4", "f1f4f5", "e3e6eb"],
    [.82, "d8dde5", "dfe3e5", "dcdfe5"], [.88, "c6d1dc", "cecfd0", "d3d8e2"], [.93, "b9c8d1", "c4c8ca", "c7cbd7"],
    [.96, "a6b8c6", "acb8c6", "b7bfcc"], [1, "899fb5", "98abc1", "a4b2c5"]] }
};
const rgb = h => [0, 2, 4].map(i => parseInt(h.substr(i, 2), 16));
const mix = (a, b, t) => a.map((v, i) => v + (b[i] - v) * t);
document.querySelectorAll(".mosaic").forEach(svg => {
  const { cols, rows, stops } = mosaics[svg.dataset.src];
  svg.setAttribute("viewBox", `0 0 ${cols} ${rows}`);
  svg.setAttribute("shape-rendering", "crispEdges");
  let out = "";
  for (let r = 0; r < rows; r++) {
    const f = r / (rows - 1);
    let k = 0;
    while (k < stops.length - 2 && stops[k + 1][0] < f) k++;
    const t = (f - stops[k][0]) / (stops[k + 1][0] - stops[k][0]);
    const line = [1, 2, 3].map(i => mix(rgb(stops[k][i]), rgb(stops[k + 1][i]), t));
    for (let c = 0; c < cols; c++) {
      const x = c / (cols - 1) * 2;
      const color = x < 1 ? mix(line[0], line[1], x) : mix(line[1], line[2], x - 1);
      out += `<rect x="${c}" y="${r}" width="1" height="1" fill="rgb(${color.map(Math.round)})"/>`;
    }
  }
  svg.innerHTML = out;
});
```
